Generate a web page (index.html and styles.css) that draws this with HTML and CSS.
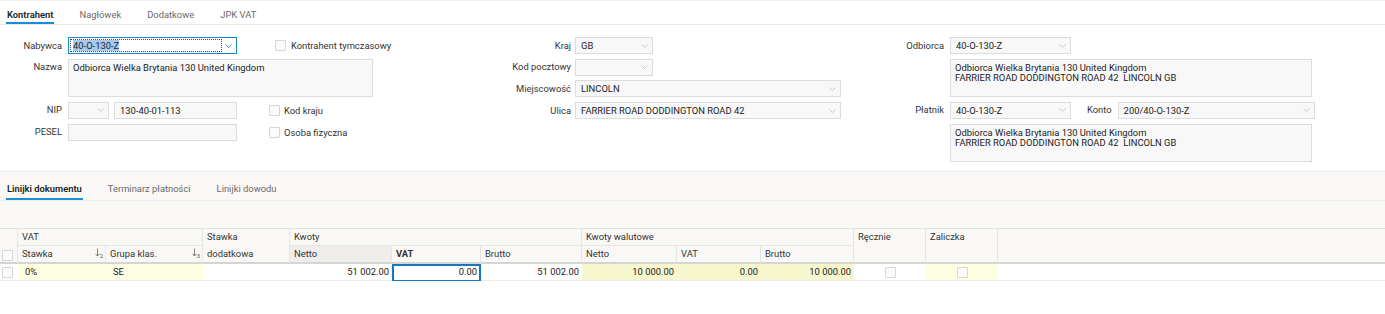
FILE: index.html
```html
<!DOCTYPE html>
<html lang="pl">
<head>
    <meta charset="UTF-8">
    <meta name="viewport" content="width=device-width, initial-scale=1.0">
    <title>Faktura sprzedaży</title>
    <link rel="stylesheet" href="styles.css">
</head>
<body>
    <div class="tabs top-tabs">
        <span class="tab active">Kontrahent</span>
        <span class="tab">Nagłówek</span>
        <span class="tab">Dodatkowe</span>
        <span class="tab">JPK VAT</span>
    </div>

    <div class="form">
        <!-- nabywca -->
        <div class="col col-left">
            <div class="row">
                <span class="lbl">Nabywca</span>
                <div class="field focused w-nab">
                    <span class="focus-ring"><span class="sel">40-O-130-Z</span></span>
                    <span class="arrow"><svg width="7" height="4" viewBox="0 0 7 4"><path d="M0.5 0.5L3.5 3.5L6.5 0.5" fill="none" stroke="#4d86bd" stroke-width="1"/></svg></span>
                </div>
                <span class="check chk-top"><i class="box"></i>Kontrahent tymczasowy</span>
            </div>
            <div class="row row-area">
                <span class="lbl">Nazwa</span>
                <div class="area w-nazwa">Odbiorca Wielka Brytania 130 United Kingdom</div>
            </div>
            <div class="row">
                <span class="lbl">NIP</span>
                <div class="field w-nipkod">
                    <span class="arrow"><svg width="7" height="4" viewBox="0 0 7 4"><path d="M0.5 0.5L3.5 3.5L6.5 0.5" fill="none" stroke="#c8c8c8" stroke-width="1"/></svg></span>
                </div>
                <div class="field w-nip">130-40-01-113</div>
                <span class="check"><i class="box"></i>Kod kraju</span>
            </div>
            <div class="row">
                <span class="lbl">PESEL</span>
                <div class="field w-pesel"></div>
                <span class="check"><i class="box"></i>Osoba fizyczna</span>
            </div>
        </div>

        <!-- adres -->
        <div class="col col-mid">
            <div class="row">
                <span class="lbl">Kraj</span>
                <div class="field w-short">GB
                    <span class="arrow"><svg width="7" height="4" viewBox="0 0 7 4"><path d="M0.5 0.5L3.5 3.5L6.5 0.5" fill="none" stroke="#c8c8c8" stroke-width="1"/></svg></span>
                </div>
            </div>
            <div class="row">
                <span class="lbl">Kod pocztowy</span>
                <div class="field w-short">
                    <span class="arrow"><svg width="7" height="4" viewBox="0 0 7 4"><path d="M0.5 0.5L3.5 3.5L6.5 0.5" fill="none" stroke="#c8c8c8" stroke-width="1"/></svg></span>
                </div>
            </div>
            <div class="row">
                <span class="lbl">Miejscowość</span>
                <div class="field w-long">LINCOLN
                    <span class="arrow"><svg width="7" height="4" viewBox="0 0 7 4"><path d="M0.5 0.5L3.5 3.5L6.5 0.5" fill="none" stroke="#c8c8c8" stroke-width="1"/></svg></span>
                </div>
            </div>
            <div class="row">
                <span class="lbl">Ulica</span>
                <div class="field w-long">FARRIER ROAD DODDINGTON ROAD 42
                    <span class="arrow"><svg width="7" height="4" viewBox="0 0 7 4"><path d="M0.5 0.5L3.5 3.5L6.5 0.5" fill="none" stroke="#c8c8c8" stroke-width="1"/></svg></span>
                </div>
            </div>
        </div>

        <!-- odbiorca / platnik -->
        <div class="col col-right">
            <div class="row">
                <span class="lbl">Odbiorca</span>
                <div class="field w-odb">40-O-130-Z
                    <span class="arrow"><svg width="7" height="4" viewBox="0 0 7 4"><path d="M0.5 0.5L3.5 3.5L6.5 0.5" fill="none" stroke="#c8c8c8" stroke-width="1"/></svg></span>
                </div>
            </div>
            <div class="row row-area">
                <span class="lbl"></span>
                <div class="area w-adres">Odbiorca Wielka Brytania 130 United Kingdom
FARRIER ROAD DODDINGTON ROAD 42  LINCOLN GB</div>
            </div>
            <div class="row">
                <span class="lbl">Płatnik</span>
                <div class="field w-odb">40-O-130-Z
                    <span class="arrow"><svg width="7" height="4" viewBox="0 0 7 4"><path d="M0.5 0.5L3.5 3.5L6.5 0.5" fill="none" stroke="#c8c8c8" stroke-width="1"/></svg></span>
                </div>
                <span class="lbl lbl-konto">Konto</span>
                <div class="field w-konto">200/40-O-130-Z
                    <span class="arrow"><svg width="7" height="4" viewBox="0 0 7 4"><path d="M0.5 0.5L3.5 3.5L6.5 0.5" fill="none" stroke="#c8c8c8" stroke-width="1"/></svg></span>
                </div>
            </div>
            <div class="row row-area">
                <span class="lbl"></span>
                <div class="area w-adres">Odbiorca Wielka Brytania 130 United Kingdom
FARRIER ROAD DODDINGTON ROAD 42  LINCOLN GB</div>
            </div>
        </div>
    </div>

    <div class="lower">
        <div class="tabs lower-tabs">
            <span class="tab active">Linijki dokumentu</span>
            <span class="tab">Terminarz płatności</span>
            <span class="tab">Linijki dowodu</span>
        </div>
        <div class="grid-space"></div>

        <table class="grid">
            <colgroup>
                <col class="c-cb"><col class="c-st"><col class="c-gr"><col class="c-sd">
                <col class="c-n"><col class="c-v"><col class="c-b">
                <col class="c-wn"><col class="c-wv"><col class="c-wb">
                <col class="c-rc"><col class="c-zl"><col>
            </colgroup>
            <thead>
                <tr class="h1">
                    <th rowspan="2" class="cb-head span2"><i class="box"></i></th>
                    <th colspan="2" class="grp">VAT</th>
                    <th rowspan="2" class="span2 two-line">Stawka<br>dodatkowa</th>
                    <th colspan="3" class="grp">Kwoty</th>
                    <th colspan="3" class="grp">Kwoty walutowe</th>
                    <th rowspan="2" class="span2">Ręcznie</th>
                    <th rowspan="2" class="span2">Zaliczka</th>
                    <th rowspan="2" class="span2 filler"></th>
                </tr>
                <tr class="h2">
                    <th>Stawka<span class="sort"><svg width="5" height="9" viewBox="0 0 5 9"><path d="M2.5 0.5V8M0.4 5.8L2.5 8L4.6 5.8" fill="none" stroke="#666" stroke-width="0.8"/></svg><sub>2</sub></span></th>
                    <th>Grupa klas.<span class="sort"><svg width="5" height="9" viewBox="0 0 5 9"><path d="M2.5 0.5V8M0.4 5.8L2.5 8L4.6 5.8" fill="none" stroke="#666" stroke-width="0.8"/></svg><sub>3</sub></span></th>
                    <th class="sorted">Netto</th>
                    <th class="bold">VAT</th>
                    <th>Brutto</th>
                    <th>Netto</th>
                    <th>VAT</th>
                    <th>Brutto</th>
                </tr>
            </thead>
            <tbody>
                <tr>
                    <td class="cb-cell"><i class="box"></i></td>
                    <td class="yel pad">0%</td>
                    <td class="yel pad">SE</td>
                    <td></td>
                    <td class="num">51 002.00</td>
                    <td class="num focus">0.00</td>
                    <td class="num">51 002.00</td>
                    <td class="num cur">10 000.00</td>
                    <td class="num cur">0.00</td>
                    <td class="num cur">10 000.00</td>
                    <td class="mid"><i class="box"></i></td>
                    <td class="mid yel"><i class="box"></i></td>
                    <td></td>
                </tr>
            </tbody>
        </table>
    </div>
</body>
</html>
```

FILE: styles.css
```css
* {
    box-sizing: border-box;
}

body {
    margin: 0;
    font-family: 'Roboto', 'Liberation Sans', sans-serif;
    font-size: 9.4px;
    color: #333;
    background: #fff;
}

/* tabs */
.tabs {
    display: flex;
    gap: 24px;
    padding-left: 6px;
}

.tab {
    padding: 0 1px;
    color: #6a6a6a;
    border-bottom: 2px solid transparent;
    white-space: nowrap;
}

.tab.active {
    color: #222;
    font-weight: 600;
    border-bottom-color: #1a8cd8;
}

.top-tabs {
    height: 25px;
    border-top: 1px solid #f0f0f0;
    border-bottom: 1px solid #e6e6e6;
}

.top-tabs .tab {
    height: 23px;
    padding-top: 6px;
    line-height: 15px;
}

/* form */
.form {
    display: flex;
    height: 146px;
    padding-top: 12px;
}

.col {
    display: flex;
    flex-direction: column;
    gap: 4.7px;
}

.col-left {
    width: 420px;
}

.col-mid {
    width: 460px;
}

.col-right {
    flex: 1;
}

.row {
    display: flex;
    align-items: center;
}

.row-area {
    align-items: flex-start;
}

.lbl {
    flex: none;
    text-align: right;
    line-height: 16px;
    color: #333;
}

.col-left .lbl {
    width: 62px;
    margin-right: 6px;
}

.col-mid .lbl {
    width: 151px;
    margin-right: 4px;
}

.col-right .lbl {
    width: 64px;
    margin-right: 6px;
}

.col-right .lbl-konto {
    width: auto;
    margin-left: 16px;
}

.field {
    flex: none;
    display: flex;
    align-items: center;
    height: 17px;
    padding-left: 5px;
    border: 1px solid #dcdcdc;
    background: #f8f8f8;
    color: #222;
    white-space: nowrap;
}

.arrow {
    display: flex;
    margin-left: auto;
    margin-right: 4px;
}

.field.focused {
    padding: 1px;
    border-color: #1a86d0;
    background: #fff;
}

.focus-ring {
    flex: 1;
    display: flex;
    align-items: center;
    height: 100%;
    padding-left: 2px;
    border: 1px dotted #444;
}

.sel {
    background: #a6c9ec;
    color: #1c2a3a;
}

.field.focused .arrow {
    width: 13px;
    margin: 0;
    justify-content: center;
}

.area {
    flex: none;
    height: 38.6px;
    padding: 3px 4px 1px;
    line-height: 10.2px;
    border: 1px solid #dcdcdc;
    background: #f8f8f8;
    color: #222;
    white-space: pre;
}

.w-nab { width: 169px; }
.w-nazwa { width: 305px; }
.w-nipkod { width: 41px; margin-right: 5px; }
.w-nip { width: 123px; }
.w-pesel { width: 169px; }
.w-short { width: 78px; }
.w-long { width: 266px; }
.w-odb { width: 121px; }
.w-konto { width: 197px; }
.w-adres { width: 362px; }

.check {
    display: flex;
    align-items: center;
    gap: 4px;
    margin-left: 32px;
    color: #333;
}

.check.chk-top {
    margin-left: 38px;
    gap: 5px;
}

.box {
    display: inline-block;
    width: 11px;
    height: 11px;
    border: 1px solid #d6d6d6;
    background: #fbfbfb;
    border-radius: 1px;
}

/* lower part */
.lower {
    background: #f9f8f6;
    border-top: 1px solid #ebebea;
}

.lower-tabs {
    height: 29px;
    border-bottom: 1px solid #ebebe9;
}

.lower-tabs .tab {
    height: 28px;
    padding-top: 10px;
    line-height: 14px;
}

.grid-space {
    height: 27px;
}

.grid {
    width: 100%;
    table-layout: fixed;
    border-collapse: separate;
    border-spacing: 0;
    border-top: 1px solid #e1e1df;
    background: #f9f8f6;
}

.c-cb { width: 18px; }
.c-st { width: 88px; }
.c-gr { width: 97px; }
.c-sd { width: 87px; }
.c-n { width: 102px; }
.c-v { width: 89px; }
.c-b { width: 101px; }
.c-wn { width: 95px; }
.c-wv { width: 84px; }
.c-wb { width: 93px; }
.c-rc { width: 72px; }
.c-zl { width: 72px; }

.grid th {
    padding: 0 4px;
    line-height: 16px;
    font-weight: normal;
    text-align: left;
    vertical-align: top;
    color: #333;
    border-right: 1px solid #e6e6e4;
    white-space: nowrap;
    overflow: hidden;
}

.grid .h1 .grp {
    border-bottom: 1px solid #e6e6e4;
}

.grid .h2 th,
.grid .span2 {
    border-bottom: 2px solid #d5d5d3;
}

.grid .two-line {
    line-height: 16.5px;
}

.grid th.filler {
    border-right: none;
}

.grid th.cb-head {
    padding: 0 0 1px 2px;
    vertical-align: bottom;
    line-height: 0;
}

.grid th.sorted {
    background: #efeeec;
}

.grid th.bold {
    font-weight: bold;
}

.sort {
    float: right;
    margin-right: -2px;
    color: #555;
    font-size: 7px;
}

.sort svg {
    vertical-align: -1px;
}

.sort sub {
    vertical-align: -2px;
    line-height: 0;
}

.grid td {
    padding: 0 4px;
    line-height: 16px;
    color: #222;
    background: #fff;
    border-bottom: 1px solid #e9e9e7;
    white-space: nowrap;
}

.grid td.cb-cell {
    padding: 0 0 0 2px;
    line-height: 0;
    vertical-align: middle;
}

.grid td.pad {
    padding-left: 7px;
}

.grid td.yel {
    background: #fefee2;
}

.grid td.cur {
    background: #f6f7cd;
}

.grid td.num {
    text-align: right;
    padding-right: 3px;
}

.grid td.focus {
    padding-right: 4px;
    border-bottom-color: #1877c2;
    box-shadow: inset 2px 0 0 #1877c2, inset -2px 0 0 #1877c2, inset 0 2px 0 #1877c2;
}

.grid td.mid {
    text-align: center;
    line-height: 0;
    vertical-align: middle;
}
```
